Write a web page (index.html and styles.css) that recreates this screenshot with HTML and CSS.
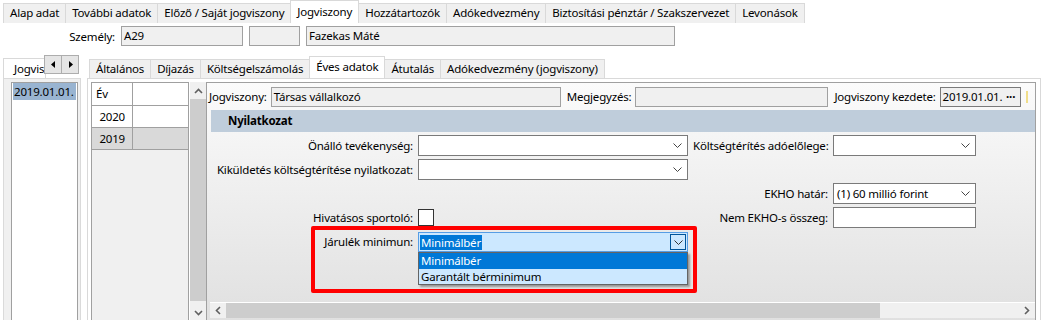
FILE: index.html
```html
<!DOCTYPE html>
<html lang="hu">
<head>
<meta charset="utf-8">
<link rel="stylesheet" href="styles.css">
</head>
<body>
<div class="toptabs">
  <div class="tab">Alap adat</div>
  <div class="tab">További adatok</div>
  <div class="tab">Előző / Saját jogviszony</div>
  <div class="tab sel">Jogviszony</div>
  <div class="tab">Hozzátartozók</div>
  <div class="tab">Adókedvezmény</div>
  <div class="tab">Biztosítási pénztár / Szakszervezet</div>
  <div class="tab">Levonások</div>
</div>

<div class="person">
  <span class="person-label">Személy:</span>
  <div class="ro w-code">A29</div>
  <div class="ro w-blank"></div>
  <div class="ro w-name">Fazekas Máté</div>
</div>

<div class="main">
  <div class="side">
    <div class="side-head">
      <div class="side-tab">Jogvis</div>
      <div class="arrows">
        <div class="arrow-btn"><svg width="5" height="7" viewBox="0 0 5 7"><path d="M4 0 L0 3.5 L4 7 Z" fill="#000"/></svg></div>
        <div class="arrow-btn"><svg width="5" height="7" viewBox="0 0 5 7"><path d="M1 0 L5 3.5 L1 7 Z" fill="#000"/></svg></div>
      </div>
    </div>
    <div class="side-page">
      <div class="list">
        <div class="list-item sel">2019.01.01.</div>
      </div>
    </div>
  </div>

  <div class="inner">
    <div class="innertabs">
      <div class="itab">Általános</div>
      <div class="itab">Díjazás</div>
      <div class="itab">Költségelszámolás</div>
      <div class="itab sel">Éves adatok</div>
      <div class="itab">Átutalás</div>
      <div class="itab">Adókedvezmény (jogviszony)</div>
    </div>
    <div class="inner-page">
      <div class="grid-wrap">
        <div class="grid">
          <div class="grow head"><div class="gc c1">Év</div><div class="gc c2"></div></div>
          <div class="grow"><div class="gc c1 num">2020</div><div class="gc c2"></div></div>
          <div class="grow selrow"><div class="gc c1 num">2019</div><div class="gc c2"></div></div>
        </div>
        <div class="vscroll">
          <div class="sb-btn"><svg width="9" height="6" viewBox="0 0 9 6"><path d="M1 5 L4.5 1.5 L8 5" fill="none" stroke="#606060" stroke-width="1.6"/></svg></div>
          <div class="vthumb"></div>
          <div class="sb-fill"></div>
          <div class="sb-btn"><svg width="9" height="6" viewBox="0 0 9 6"><path d="M1 1 L4.5 4.5 L8 1" fill="none" stroke="#606060" stroke-width="1.6"/></svg></div>
        </div>
      </div>

      <div class="form">
        <div class="jv-row">
          <span class="lbl">Jogviszony:</span>
          <div class="ro w-jv">Társas vállalkozó</div>
          <span class="lbl gap-l">Megjegyzés:</span>
          <div class="ro w-megj"></div>
          <span class="lbl gap-l">Jogviszony kezdete:</span>
          <div class="ro date w-date"><span>2019.01.01.</span><span class="dots">···</span></div>
          <span class="cut"></span>
        </div>
        <div class="band">Nyilatkozat</div>
        <div class="fields">
          <span class="flbl">Önálló tevékenység:</span>
          <div class="select"><span></span><svg class="chev" width="9" height="5" viewBox="0 0 9 5"><path d="M0.5 0.5 L4.5 4.5 L8.5 0.5" fill="none" stroke="#444" stroke-width="1"/></svg></div>
          <span class="flbl">Költségtérítés adóelőlege:</span>
          <div class="select"><span></span><svg class="chev" width="9" height="5" viewBox="0 0 9 5"><path d="M0.5 0.5 L4.5 4.5 L8.5 0.5" fill="none" stroke="#444" stroke-width="1"/></svg></div>

          <span class="flbl">Kiküldetés költségtérítése nyilatkozat:</span>
          <div class="select"><span></span><svg class="chev" width="9" height="5" viewBox="0 0 9 5"><path d="M0.5 0.5 L4.5 4.5 L8.5 0.5" fill="none" stroke="#444" stroke-width="1"/></svg></div>
          <span></span>
          <span></span>

          <span></span>
          <span></span>
          <span class="flbl">EKHO határ:</span>
          <div class="select"><span>(1) 60 millió forint</span><svg class="chev" width="9" height="5" viewBox="0 0 9 5"><path d="M0.5 0.5 L4.5 4.5 L8.5 0.5" fill="none" stroke="#444" stroke-width="1"/></svg></div>

          <span class="flbl">Hivatásos sportoló:</span>
          <div class="cbcell"><div class="checkbox"></div></div>
          <span class="flbl">Nem EKHO-s összeg:</span>
          <div class="textbox"></div>

          <span class="flbl">Járulék minimun:</span>
          <div class="combo">
            <span class="combo-sel">Minimálbér</span>
            <div class="combo-btn"><svg width="9" height="5" viewBox="0 0 9 5"><path d="M0.5 0.5 L4.5 4.5 L8.5 0.5" fill="none" stroke="#333" stroke-width="1"/></svg></div>
            <div class="dropdown">
              <div class="dd-item active">Minimálbér</div>
              <div class="dd-item">Garantált bérminimum</div>
            </div>
          </div>
          <span></span>
          <span></span>
        </div>
        <div class="highlight"></div>
        <div class="hscroll">
          <div class="hsb-btn"><svg width="6" height="9" viewBox="0 0 6 9"><path d="M5 1 L1.5 4.5 L5 8" fill="none" stroke="#606060" stroke-width="1.6"/></svg></div>
          <div class="hthumb"></div>
          <div class="sb-fill"></div>
          <div class="hsb-btn"><svg width="6" height="9" viewBox="0 0 6 9"><path d="M1 1 L4.5 4.5 L1 8" fill="none" stroke="#606060" stroke-width="1.6"/></svg></div>
        </div>
      </div>
    </div>
  </div>
</div>
</body>
</html>
```

FILE: styles.css
```css
* { box-sizing: border-box; }
html, body { margin: 0; padding: 0; }
body {
  width: 1043px;
  height: 320px;
  overflow: hidden;
  background: #ffffff;
  font-family: "Noto Sans", "Open Sans", sans-serif;
  font-size: 11.5px;
  letter-spacing: -0.2px;
  color: #000;
}

/* top tabs */
.toptabs {
  display: flex;
  align-items: flex-end;
  height: 23px;
  padding-left: 3px;
}
.tab {
  height: 20px;
  padding: 0 6px;
  background: #f0f0f0;
  border: 1px solid #d9d9d9;
  border-bottom: none;
  margin-left: -1px;
  line-height: 18px;
  white-space: nowrap;
}
.tab:first-child { margin-left: 0; }
.tab.sel {
  height: 23px;
  background: #fff;
  line-height: 21px;
  position: relative;
  z-index: 1;
}

/* person row */
.person {
  display: flex;
  align-items: center;
  margin-top: 3px;
  height: 20px;
  gap: 6px;
}
.person-label { width: 115px; text-align: right; }
.ro {
  height: 20px;
  background: #f0f0f0;
  border: 1px solid #a0a0a0;
  padding: 0 2px;
  line-height: 18px;
  white-space: nowrap;
  overflow: hidden;
}
.w-code { width: 122px; }
.w-blank { width: 51px; }
.w-name { width: 369px; }

/* main area */
.main {
  display: flex;
  margin-top: 9px;
  height: 265px;
}
.side { width: 85px; flex: none; }
.side-head {
  height: 23px;
  display: flex;
  align-items: flex-start;
  padding-left: 3px;
}
.side-tab {
  margin-top: 3px;
  width: 43px;
  height: 20px;
  padding-left: 10px;
  border: 1px solid #d9d9d9;
  border-bottom: none;
  background: #fff;
  line-height: 19px;
  white-space: nowrap;
}
.arrows { display: flex; margin-left: -1px; }
.arrow-btn {
  width: 18px;
  height: 19px;
  border: 1px solid #adadad;
  background: #e5e5e5;
  display: flex;
  align-items: center;
  justify-content: center;
  margin-left: -1px;
}
.side-page {
  margin-left: 3px;
  width: 78px;
  height: 242px;
  border: 1px solid #dadada;
  border-bottom: none;
  background: #f0f0f0;
  padding: 3px 2px 0 7px;
}
.list {
  height: 100%;
  background: #fff;
  border: 1px solid #a0a0a0;
  border-bottom: none;
  padding: 0 1px;
}
.list-item {
  height: 17px;
  line-height: 17px;
  white-space: nowrap;
  padding-left: 1px;
}
.list-item.sel { background: #99b4d1; }

/* inner tab control */
.inner { flex: 1; }
.innertabs {
  height: 23px;
  display: flex;
  align-items: flex-end;
  padding-left: 4px;
}
.itab {
  height: 19px;
  padding: 0 6px;
  background: #f0f0f0;
  border: 1px solid #d9d9d9;
  border-bottom: none;
  margin-left: -1px;
  line-height: 17px;
  white-space: nowrap;
}
.itab:first-child { margin-left: 0; }
.itab.sel {
  height: 22px;
  background: #fff;
  line-height: 19px;
  position: relative;
  z-index: 1;
}
.inner-page {
  margin-left: 2px;
  width: 954px;
  height: 242px;
  border: 1px solid #d9d9d9;
  border-bottom: none;
  background: #fff;
  padding: 3px 0 0 3px;
  display: flex;
}

/* grid */
.grid-wrap { display: flex; height: 239px; }
.grid {
  width: 98px;
  height: 100%;
  background: #f0f0f0;
  border: 1px solid #a0a0a0;
  border-bottom: none;
}
.grow { display: flex; height: 22px; border-bottom: 1px solid #a0a0a0; background: #fff; }
.grow.head { height: 23px; }
.grow.selrow { background: #d9d9d9; }
.gc { line-height: 21px; padding: 0 4px; }
.c1 { width: 41px; border-right: 1px solid #a0a0a0; }
.c2 { flex: 1; }
.num { text-align: right; padding-right: 7px; }

.vscroll {
  width: 16px;
  height: 100%;
  background: #f0f0f0;
  display: flex;
  flex-direction: column;
  margin-left: 1px;
}
.sb-btn {
  height: 17px;
  display: flex;
  align-items: center;
  justify-content: center;
  flex: none;
}
.vthumb { height: 202px; background: #cdcdcd; flex: none; }
.sb-fill { flex: 1; }

/* form */
.form {
  position: relative;
  width: 830px;
  height: 239px;
  border-left: 1px solid #a0a0a0;
  border-right: 1px solid #a0a0a0;
  border-top: 1px solid #a0a0a0;
  background: linear-gradient(#fbfbfb, #e0e0e0);
  display: flex;
  flex-direction: column;
}
.jv-row {
  display: flex;
  align-items: center;
  height: 21px;
  margin-top: 3px;
  padding-left: 2px;
}
.lbl { white-space: nowrap; margin-right: 4px; }
.gap-l { margin-left: 6px; }
.w-jv { width: 290px; }
.w-megj { width: 193px; }
.w-date { width: 81px; border-color: #7a7a7a; }
.date { display: flex; justify-content: space-between; }
.dots { font-weight: bold; letter-spacing: 0; padding-right: 2px; }
.cut { width: 2px; height: 12px; margin-left: 5px; background: #f1de8a; }

.band {
  margin: 3px 0 0 4px;
  height: 22px;
  background: #bfcddb;
  font-weight: bold;
  line-height: 22px;
  padding-left: 17px;
}

.fields {
  display: grid;
  grid-template-columns: 206px 270px 135px 143px;
  grid-auto-rows: 21px;
  column-gap: 5px;
  row-gap: 3px;
  margin-top: 3px;
}
.flbl { text-align: right; white-space: nowrap; line-height: 21px; }
.select, .textbox {
  background: #fff;
  border: 1px solid #7a7a7a;
  display: flex;
  align-items: center;
  justify-content: space-between;
  padding: 0 5px 0 3px;
  white-space: nowrap;
}
.chev { flex: none; }
.cbcell { display: flex; align-items: center; }
.checkbox { width: 16px; height: 17px; background: #fff; border: 1px solid #333; }

.combo {
  position: relative;
  margin-top: 1px;
  height: 20px;
  background: #cce8ff;
  border: 1px solid #569de5;
  display: flex;
  align-items: center;
  justify-content: space-between;
  padding: 0 1px 0 1px;
}
.combo-sel {
  background: #0078d7;
  color: #fff;
  padding: 0 1px;
  line-height: 15px;
}
.combo-btn {
  width: 16px;
  height: 16px;
  border: 1px solid #005499;
  background: #cce8ff;
  display: flex;
  align-items: center;
  justify-content: center;
}
.dropdown {
  position: absolute;
  left: -1px;
  top: 19px;
  width: 270px;
  background: #cce8ff;
  border: 1px solid #646464;
  box-shadow: 2px 2px 2px rgba(0, 0, 0, 0.35);
  z-index: 3;
}
.dd-item { height: 15px; line-height: 15px; padding-left: 2px; white-space: nowrap; }
.dd-item.active { height: 16px; background: #0078d7; color: #fff; }

.highlight {
  position: absolute;
  left: 104px;
  top: 143px;
  width: 386px;
  height: 67px;
  border: 4px solid #ff0000;
  border-radius: 2px;
  z-index: 2;
  pointer-events: none;
}

.hscroll {
  margin: auto 0 3px 3px;
  height: 16px;
  border-top: 1px solid #fff;
  background: #f0f0f0;
  display: flex;
}
.hsb-btn {
  width: 16px;
  display: flex;
  align-items: center;
  justify-content: center;
  flex: none;
}
.hthumb { width: 654px; background: #cdcdcd; flex: none; }
```
